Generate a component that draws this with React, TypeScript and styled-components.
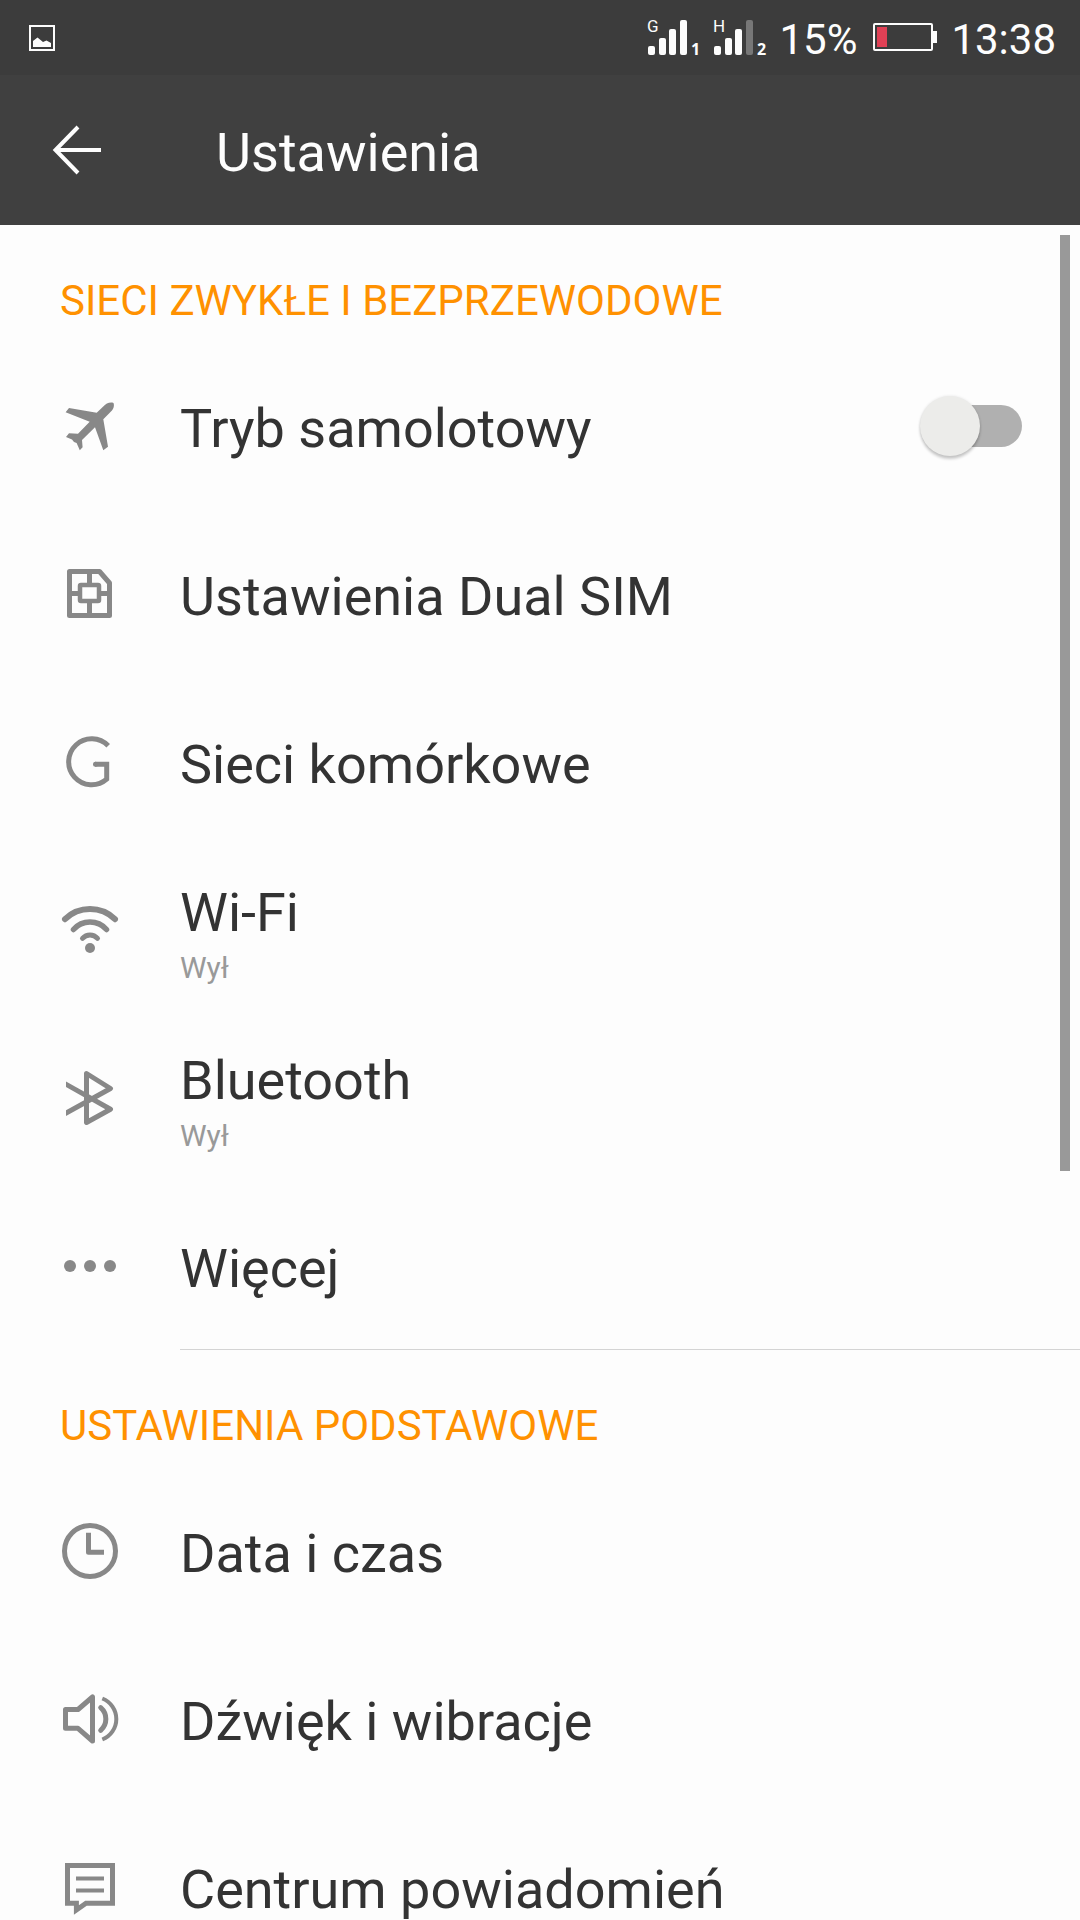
import React, { useState } from 'react';
import type { ReactNode } from 'react';
import styled, { createGlobalStyle } from 'styled-components';

const GlobalStyle = createGlobalStyle`
  *, *::before, *::after { box-sizing: border-box; }
  body {
    margin: 0;
    background: #fdfdfd;
    color: #333333;
    font-family: Roboto, "Noto Sans", sans-serif;
  }
`;

const Screen = styled.div`
  display: flex;
  flex-direction: column;
  height: 100vh;
  overflow: hidden;
`;

const StatusBar = styled.div`
  display: flex;
  flex: none;
  align-items: center;
  justify-content: space-between;
  height: 75px;
  padding: 0 24px 0 29px;
  background: #3c3c3c;
  color: #fdfdfd;
`;

const StatusGroup = styled.div`
  display: flex;
  align-items: center;
  gap: 12px;
`;

const StatusText = styled.span`
  padding-top: 4px;
  font-size: 42px;
  line-height: 48px;
`;

const SignalGraphic = styled.svg`
  width: 54px;
  height: 47px;
  overflow: visible;
  fill: #fdfdfd;
`;

const NetworkText = styled.text`
  font-size: 17px;
`;

const SlotText = styled.text`
  font-family: "Noto Sans", sans-serif;
  font-size: 16px;
  font-weight: 700;
`;

const AppBar = styled.header`
  display: flex;
  flex: none;
  align-items: center;
  gap: 96px;
  height: 150px;
  padding: 0 36px 0 48px;
  background: #404040;
  color: #fdfdfd;
`;

const BackButton = styled.button`
  display: flex;
  align-items: center;
  justify-content: center;
  width: 72px;
  height: 72px;
  padding: 0 12px 0 0;
  border: 0;
  background: none;
  color: inherit;
  cursor: pointer;
`;

const Title = styled.h1`
  margin: 0;
  padding-top: 6px;
  font-size: 54px;
  font-weight: 400;
  line-height: 70px;
`;

const Body = styled.div`
  position: relative;
  flex: 1;
  min-height: 0;
`;

const Content = styled.main`
  height: 100%;
  overflow-y: auto;
  scrollbar-width: none;
`;

const ScrollThumb = styled.div`
  position: absolute;
  top: 10px;
  right: 10px;
  width: 10px;
  height: calc((100% - 10px) * 5 / 9);
  background: #999999;
  pointer-events: none;
`;

const SectionTitle = styled.h2`
  margin: 0;
  padding: 52px 60px 17px;
  color: #ff9100;
  font-size: 42px;
  font-weight: 400;
  line-height: 48px;
`;

const Divider = styled.hr`
  height: 1px;
  margin: -1px 0 0 180px;
  border: 0;
  background: #d4d4d4;
`;

const List = styled.ul`
  margin: 0;
  padding: 0;
  list-style: none;
`;

const Row = styled.a`
  display: flex;
  align-items: center;
  gap: 60px;
  height: 168px;
  padding: 0 58px 0 60px;
  color: inherit;
  text-decoration: none;
  cursor: pointer;
`;

const Icon = styled.svg`
  flex: none;
  width: 60px;
  height: 60px;
  fill: none;
  stroke: #888888;
  stroke-width: 5;
`;

const Labels = styled.span`
  display: flex;
  flex: 1;
  flex-direction: column;
  padding-top: 5px;
`;

const Label = styled.span`
  font-size: 54px;
  line-height: 70px;
`;

const Summary = styled.span`
  color: #999999;
  font-size: 30px;
  line-height: 40px;
`;

const Switch = styled.input`
  appearance: none;
  display: flex;
  flex: none;
  align-items: center;
  width: 102px;
  height: 42px;
  margin: 0;
  border-radius: 21px;
  background: linear-gradient(to right, transparent 20px, #b0b0b0 20px);
  cursor: pointer;

  &::before {
    content: '';
    width: 60px;
    height: 60px;
    border-radius: 50%;
    background: #ececea;
    box-shadow: 0 3px 3px rgba(0, 0, 0, 0.2), 0 0 3px rgba(0, 0, 0, 0.1);
  }

  &:checked {
    justify-content: flex-end;
    background: linear-gradient(to left, transparent 20px, #ffc680 20px);
  }

  &:checked::before {
    background: #ff9100;
  }
`;

function PictureIcon() {
  return (
    <svg width="26" height="26" viewBox="0 0 26 26" aria-hidden="true">
      <rect x="1" y="1" width="24" height="24" fill="none" stroke="#fdfdfd" strokeWidth="2" />
      <path d="M4 22V16L8.500 12.500L14 17L17.500 15.500L22 18V22Z" fill="#fdfdfd" />
    </svg>
  );
}

const SIGNAL_BARS = [
  { x: 1, y: 32 },
  { x: 12, y: 24 },
  { x: 22, y: 15 },
  { x: 33, y: 6 },
];

function Signal({ network, slot, level }: { network: string; slot: number; level: number }) {
  return (
    <SignalGraphic viewBox="0 0 54 47">
      {SIGNAL_BARS.map((bar, i) => (
        <rect
          key={bar.x}
          x={bar.x}
          y={bar.y}
          width="7"
          height={41 - bar.y}
          rx="2"
          fill={i < level ? '#fdfdfd' : '#777777'}
        />
      ))}
      <NetworkText x="0" y="18">{network}</NetworkText>
      <SlotText x="44" y="41">{slot}</SlotText>
    </SignalGraphic>
  );
}

function Battery() {
  return (
    <svg width="70" height="29" viewBox="0 0 70 29" aria-hidden="true">
      <rect x="5" y="1" width="58" height="26" rx="1" fill="none" stroke="#fdfdfd" strokeWidth="2" />
      <rect x="64" y="8" width="4" height="12" fill="#fdfdfd" />
      <rect x="8" y="4" width="10" height="20" fill="#e04055" />
    </svg>
  );
}

const icons: Record<string, ReactNode> = {
  airplane: (
    <path
      fill="#888888"
      stroke="none"
      d="M9 12L36.700 16.700L43 10.700C46 7.500 50 5.800 53.500 7C54.800 10.500 53 14 49.500 17L43.300 23.300L48 50.700L43.300 54.300L35 31.300L22 44L22.600 51.300L19.800 54.300L16.600 47L14 46L12 43.500L6 41L9 37.300L18 37.700L29.700 25.700L5.600 16.300Z"
    />
  ),
  sim: (
    <>
      <path strokeLinejoin="round" d="M9.500 7.500H39.500L49.500 19V51.500H9.500Z" />
      <rect x="20" y="21" width="19" height="16" rx="1" strokeWidth="4.500" />
      <path d="M29.500 7V20M29.500 38V52M9 29.500H19M40 29.500H50" />
    </>
  ),
  cellular: (
    <>
      <path d="M48.200 13.800A23 23 0 1 0 46.700 47.200V32.200H35" />
      <circle cx="35.500" cy="32.200" r="2.500" fill="#888888" stroke="none" />
    </>
  ),
  wifi: (
    <>
      <circle cx="30" cy="48" r="5" fill="#888888" stroke="none" />
      <g strokeLinecap="round">
        <path d="M22.500 38.300A10 10 0 0 1 37.500 38.300" />
        <path strokeWidth="5.500" d="M13.500 29.500A22 22 0 0 1 46.500 29.500" />
        <path strokeWidth="6" d="M5 19.200A36 36 0 0 1 55 19.200" />
      </g>
    </>
  ),
  bluetooth: (
    <>
      <clipPath id="bluetooth-edge">
        <rect x="6" y="0" width="54" height="60" />
      </clipPath>
      <path
        clipPath="url(#bluetooth-edge)"
        strokeLinejoin="round"
        d="M2 14L50.500 41.300L26.500 54.500V5.500L50.500 20.500L2 47.300"
      />
    </>
  ),
  more: (
    <g fill="#888888" stroke="none">
      <circle cx="10" cy="30" r="6" />
      <circle cx="30" cy="30" r="6" />
      <circle cx="50" cy="30" r="6" />
    </g>
  ),
  clock: (
    <>
      <circle cx="30" cy="30" r="25.500" />
      <path strokeLinejoin="round" d="M28.500 11.700V31.300H44" />
    </>
  ),
  sound: (
    <>
      <path strokeLinejoin="round" d="M32.500 8V52L18 39.300H5.500V20.500H18Z" />
      <path strokeLinecap="round" d="M40.700 18.700A15 15 0 0 1 40.700 41.300" />
      <path strokeWidth="4" d="M42.300 9.500A22 22 0 0 1 42.300 50.500" />
    </>
  ),
  message: (
    <>
      <path d="M7.500 8.500H52.500V46.200H26L16.400 53V46.200H7.500Z" />
      <path strokeWidth="4" d="M16 21.500H44M16 33.500H44" />
    </>
  ),
};

function RowContent({ icon, label, summary }: { icon: string; label: string; summary?: string }) {
  return (
    <>
      <Icon viewBox="0 0 60 60" aria-hidden="true">{icons[icon]}</Icon>
      <Labels>
        <Label>{label}</Label>
        {summary && <Summary>{summary}</Summary>}
      </Labels>
    </>
  );
}

function LinkRow(props: { icon: string; label: string; summary?: string }) {
  return (
    <li>
      <Row href={`#${props.icon}`}>
        <RowContent {...props} />
      </Row>
    </li>
  );
}

export default function App() {
  const [airplane, setAirplane] = useState(false);

  return (
    <Screen>
      <GlobalStyle />
      <StatusBar>
        <PictureIcon />
        <StatusGroup>
          <Signal network="G" slot={1} level={4} />
          <Signal network="H" slot={2} level={3} />
          <StatusText>15%</StatusText>
          <Battery />
          <StatusText>13:38</StatusText>
        </StatusGroup>
      </StatusBar>
      <AppBar>
        <BackButton type="button" aria-label="Wstecz">
          <svg width="60" height="60" viewBox="0 0 60 60" fill="none" stroke="currentColor" strokeWidth="4">
            <path d="M53 30H8M30 7L7.500 30L30 53" />
          </svg>
        </BackButton>
        <Title>Ustawienia</Title>
      </AppBar>
      <Body>
        <Content>
          <section>
            <SectionTitle>SIECI ZWYKŁE I BEZPRZEWODOWE</SectionTitle>
            <List>
              <li>
                <Row as="label">
                  <RowContent icon="airplane" label="Tryb samolotowy" />
                  <Switch
                    type="checkbox"
                    role="switch"
                    checked={airplane}
                    onChange={(event) => setAirplane(event.target.checked)}
                  />
                </Row>
              </li>
              <LinkRow icon="sim" label="Ustawienia Dual SIM" />
              <LinkRow icon="cellular" label="Sieci komórkowe" />
              <LinkRow icon="wifi" label="Wi-Fi" summary="Wył" />
              <LinkRow icon="bluetooth" label="Bluetooth" summary="Wył" />
              <LinkRow icon="more" label="Więcej" />
            </List>
            <Divider />
          </section>
          <section>
            <SectionTitle>USTAWIENIA PODSTAWOWE</SectionTitle>
            <List>
              <LinkRow icon="clock" label="Data i czas" />
              <LinkRow icon="sound" label="Dźwięk i wibracje" />
              <LinkRow icon="message" label="Centrum powiadomień" />
            </List>
          </section>
        </Content>
        <ScrollThumb />
      </Body>
    </Screen>
  );
}
